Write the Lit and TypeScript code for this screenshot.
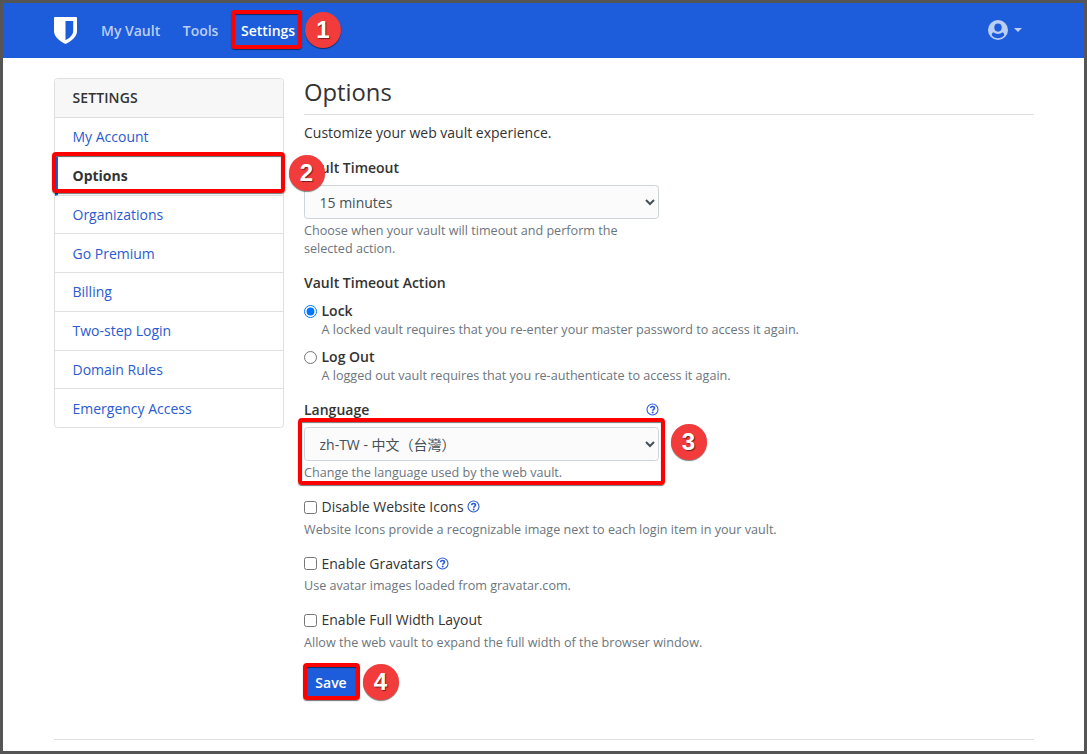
import { LitElement, html, css } from "lit";
import { customElement, property } from "lit/decorators.js";

const helpIcon = html`<svg class="help" viewBox="0 0 13 13" width="13" height="13" aria-hidden="true">
  <circle cx="6.5" cy="6.5" r="5.5" fill="none" stroke="#2a5bd8" stroke-width="1.1"/>
  <path d="M4.600 5.100C4.700 3.900 5.400 3.500 6.500 3.500C7.700 3.500 8.500 4.100 8.500 5.100C8.500 6.400 6.700 6.400 6.700 7.800" fill="none" stroke="#2a5bd8" stroke-width="1.6"/>
  <circle cx="6.700" cy="9.500" r="0.950" fill="#2a5bd8"/>
</svg>`;

@customElement("step-marker")
export class StepMarker extends LitElement {
  @property() label = "";

  static styles = css`
    :host {
      position: absolute;
      display: flex;
      align-items: center;
      justify-content: center;
      width: 36px;
      height: 36px;
      border-radius: 50%;
      background: #f23b3b;
      box-shadow: 0 1px 1px rgba(0, 0, 0, 0.5);
      color: #fff;
      font: bold 24px/36px "Liberation Sans", Arial, sans-serif;
      text-shadow: 1px 1px 1px rgba(0, 0, 0, 0.5);
    }
  `;

  render() {
    return html`${this.label}`;
  }
}

@customElement("app-root")
export class AppRoot extends LitElement {
  static styles = css`
    :host {
      display: block;
      position: relative;
      box-sizing: border-box;
      width: 1087px;
      height: 754px;
      border: 3px solid #555;
      background: #fff;
      color: #333;
      font: 14px/21px "Open Sans", "Noto Sans CJK TC", sans-serif;
      overflow: hidden;
    }
    * { box-sizing: border-box; }
    nav {
      display: flex;
      align-items: center;
      height: 55px;
      padding: 0 61px 0 51px;
      background: #1d5ddb;
      font-weight: 600;
      color: #bbcef4;
    }
    .logo { margin-right: 24px; display: block; }
    .link { margin-right: 22.5px; }
    .link.active { color: #fff; }
    .user { display: flex; align-items: center; gap: 6px; margin-left: auto; padding: 0 1px 2px 0; }
    .caret { border: 4.5px solid transparent; border-top-color: #bbcef4; border-bottom: 0; }
    .container { display: flex; gap: 20px; width: 980px; margin: 20px 0 0 51px; height: 662px; border-bottom: 1px solid #dfdfdf; }
    .card { width: 230px; height: 350px; border: 1px solid #dfdfdf; border-radius: 3.5px; overflow: hidden; }
    .card-header { height: 39px; padding: 8px 17.5px; background: #f7f7f7; border-bottom: 1px solid #dfdfdf; font-weight: 600; letter-spacing: 0.1px; }
    .item { height: 38.75px; padding: 8.4px 17.5px; border-bottom: 1px solid #dfdfdf; color: #2a5bd0; }
    .item:last-child { border-bottom: 0; }
    .item.active { border-left: 3px solid #175ddc; padding-left: 14.5px; color: #333; font-weight: 700; }
    main { width: 730px; }
    h1 { margin: 0 0 7px; height: 37px; border-bottom: 1px solid #dfdfe2; font-size: 23.8px; line-height: 28.6px; font-weight: 400; }
    p { margin: 0; }
    .field { width: 355px; }
    .label { display: flex; justify-content: space-between; align-items: center; font-weight: 600; height: 21px; margin-bottom: 7px; }
    select {
      display: block;
      width: 355px;
      height: 34px;
      padding: 0 10.5px;
      border: 1px solid #ced4da;
      border-radius: 3.5px;
      background: #fbfbfb;
      color: #465057;
      font: inherit;
    }
    small { display: block; font-size: 12.6px; line-height: 18px; color: #6c757d; }
    .field small { margin-top: 3px; }
    .timeout { margin-top: 14px; height: 115px; }
    .option { display: flex; flex-wrap: wrap; align-content: flex-start; align-items: center; }
    .option input { margin: 1px 4.5px 0 0; width: 13px; height: 13px; }
    .option small { width: 100%; }
    .radio { height: 46px; font-weight: 600; }
    .radio small { padding-left: 17.5px; font-weight: 400; }
    .language { margin-top: 7px; height: 97px; }
    .check { height: 56.6px; }
    .check small { margin-top: 3.6px; }
    .check .help { margin-left: 3px; }
    .save { display: block; width: 54px; height: 33px; padding: 0; border: 0; border-radius: 3px; background: #1d5ddb; color: #fff; font: 600 14px/33px "Open Sans", sans-serif; }
    .mark { position: absolute; border: 4px solid #f00; border-radius: 4px; box-shadow: 0 1px 1px rgba(0, 0, 0, 0.55), inset 0 1px 1px rgba(0, 0, 0, 0.55); }
    .mark-nav { left: 228px; top: 7px; width: 71px; height: 39px; }
    .mark-item { left: 49px; top: 149px; width: 233px; height: 41px; }
    .mark-language { left: 295px; top: 415px; width: 367px; height: 67px; }
    .mark-save { left: 300px; top: 660px; width: 57px; height: 37px; }
    .step1 { left: 302px; top: 9px; }
    .step2 { left: 285.5px; top: 152px; }
    .step3 { left: 667.5px; top: 421px; }
    .step4 { left: 359.5px; top: 661px; }
  `;

  private items = ["My Account", "Options", "Organizations", "Go Premium", "Billing", "Two-step Login", "Domain Rules", "Emergency Access"];

  render() {
    return html`
      <nav>
        <svg class="logo" width="23" height="27" viewBox="0 0 23 27">
          <path d="M1 0H22Q23 0 23 1V14C23 20 17 24.500 11.500 27C6 24.500 0 20 0 14V1Q0 0 1 0Z" fill="#fff"/>
          <path d="M11.500 4H19.200V14C19.200 18 15.500 21 11.500 23.200Z" fill="#1d5ddb"/>
        </svg>
        <span class="link">My Vault</span>
        <span class="link">Tools</span>
        <span class="link active">Settings</span>
        <span class="user">
          <svg width="20" height="20" viewBox="0 0 20 20">
            <circle cx="10" cy="10" r="10" fill="#bbcef4"/>
            <ellipse cx="10" cy="7.600" rx="3.700" ry="4.100" fill="#1d5ddb"/>
            <path d="M5.600 12.300C6.800 13.400 8.300 13.900 10 13.900S13.200 13.400 14.400 12.300C15.600 12.700 16.200 13.800 16.300 15.300C14.800 17.200 12.600 18.300 10 18.300S5.200 17.200 3.700 15.300C3.800 13.800 4.400 12.700 5.600 12.300Z" fill="#1d5ddb"/>
          </svg>
          <span class="caret"></span>
        </span>
      </nav>
      <div class="container">
        <aside class="card">
          <div class="card-header">SETTINGS</div>
          ${this.items.map((t) => html`<div class="item ${t === "Options" ? "active" : ""}">${t}</div>`)}
        </aside>
        <main>
          <h1>Options</h1>
          <p>Customize your web vault experience.</p>
          <div class="field timeout">
            <div class="label">Vault Timeout</div>
            <select><option>15 minutes</option></select>
            <small>Choose when your vault will timeout and perform the selected action.</small>
          </div>
          <div class="label">Vault Timeout Action</div>
          <div class="option radio">
            <input type="radio" name="action" checked /><span>Lock</span>
            <small>A locked vault requires that you re-enter your master password to access it again.</small>
          </div>
          <div class="option radio">
            <input type="radio" name="action" /><span>Log Out</span>
            <small>A logged out vault requires that you re-authenticate to access it again.</small>
          </div>
          <div class="field language">
            <div class="label"><span>Language</span>${helpIcon}</div>
            <select><option>zh-TW - 中文（台灣）</option></select>
            <small>Change the language used by the web vault.</small>
          </div>
          <div class="option check">
            <input type="checkbox" /><span>Disable Website Icons</span>${helpIcon}
            <small>Website Icons provide a recognizable image next to each login item in your vault.</small>
          </div>
          <div class="option check">
            <input type="checkbox" /><span>Enable Gravatars</span>${helpIcon}
            <small>Use avatar images loaded from gravatar.com.</small>
          </div>
          <div class="option check">
            <input type="checkbox" /><span>Enable Full Width Layout</span>
            <small>Allow the web vault to expand the full width of the browser window.</small>
          </div>
          <button class="save">Save</button>
        </main>
      </div>
      <div class="mark mark-nav"></div>
      <div class="mark mark-item"></div>
      <div class="mark mark-language"></div>
      <div class="mark mark-save"></div>
      <step-marker class="step1" label="1"></step-marker>
      <step-marker class="step2" label="2"></step-marker>
      <step-marker class="step3" label="3"></step-marker>
      <step-marker class="step4" label="4"></step-marker>
    `;
  }
}
